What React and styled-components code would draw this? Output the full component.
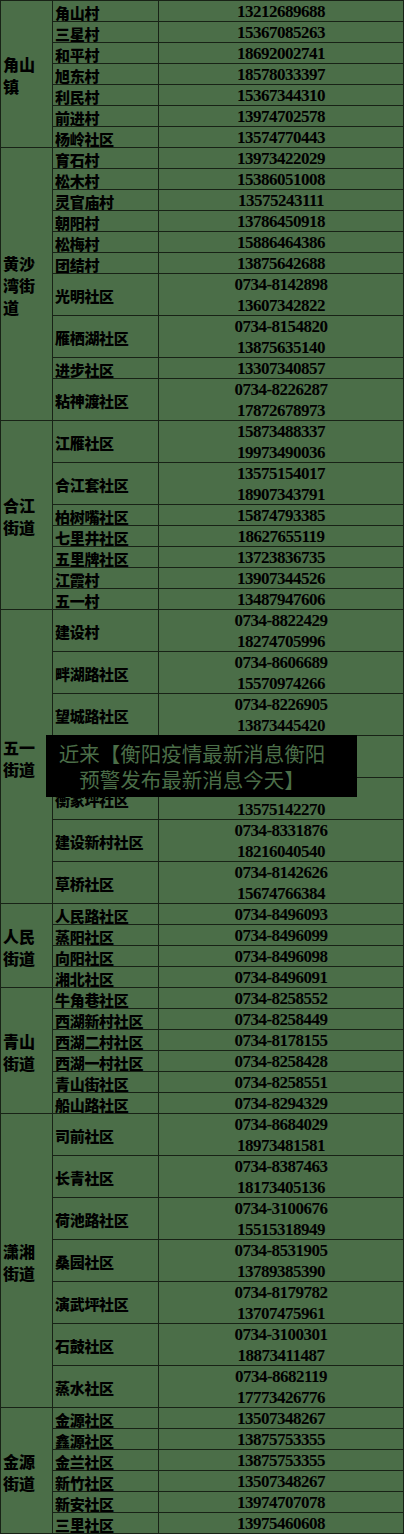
import React from 'react';
import styled, {createGlobalStyle} from 'styled-components';

const groups = [
    {name: '角山镇', rows: [
        ['角山村', ['13212689688']],
        ['三星村', ['15367085263']],
        ['和平村', ['18692002741']],
        ['旭东村', ['18578033397']],
        ['利民村', ['15367344310']],
        ['前进村', ['13974702578']],
        ['杨岭社区', ['13574770443']],
    ]},
    {name: '黄沙湾街道', rows: [
        ['育石村', ['13973422029']],
        ['松木村', ['15386051008']],
        ['灵官庙村', ['13575243111']],
        ['朝阳村', ['13786450918']],
        ['松梅村', ['15886464386']],
        ['团结村', ['13875642688']],
        ['光明社区', ['0734-8142898', '13607342822']],
        ['雁栖湖社区', ['0734-8154820', '13875635140']],
        ['进步社区', ['13307340857']],
        ['粘神渡社区', ['0734-8226287', '17872678973']],
    ]},
    {name: '合江街道', rows: [
        ['江雁社区', ['15873488337', '19973490036']],
        ['合江套社区', ['13575154017', '18907343791']],
        ['柏树嘴社区', ['15874793385']],
        ['七里井社区', ['18627655119']],
        ['五里牌社区', ['13723836735']],
        ['江霞村', ['13907344526']],
        ['五一村', ['13487947606']],
    ]},
    {name: '五一街道', rows: [
        ['建设村', ['0734-8822429', '18274705996']],
        ['畔湖路社区', ['0734-8606689', '15570974266']],
        ['望城路社区', ['0734-8226905', '13873445420']],
        ['解放路社区', ['0734-8221930', '13975401128']],
        ['衡家坪社区', ['0734-8142270', '13575142270']],
        ['建设新村社区', ['0734-8331876', '18216040540']],
        ['草桥社区', ['0734-8142626', '15674766384']],
    ]},
    {name: '人民街道', rows: [
        ['人民路社区', ['0734-8496093']],
        ['蒸阳社区', ['0734-8496099']],
        ['向阳社区', ['0734-8496098']],
        ['湘北社区', ['0734-8496091']],
    ]},
    {name: '青山街道', rows: [
        ['牛角巷社区', ['0734-8258552']],
        ['西湖新村社区', ['0734-8258449']],
        ['西湖二村社区', ['0734-8178155']],
        ['西湖一村社区', ['0734-8258428']],
        ['青山街社区', ['0734-8258551']],
        ['船山路社区', ['0734-8294329']],
    ]},
    {name: '潇湘街道', rows: [
        ['司前社区', ['0734-8684029', '18973481581']],
        ['长青社区', ['0734-8387463', '18173405136']],
        ['荷池路社区', ['0734-3100676', '15515318949']],
        ['桑园社区', ['0734-8531905', '13789385390']],
        ['演武坪社区', ['0734-8179782', '13707475961']],
        ['石鼓社区', ['0734-3100301', '18873411487']],
        ['蒸水社区', ['0734-8682119', '17773426776']],
    ]},
    {name: '金源街道', rows: [
        ['金源社区', ['13507348267']],
        ['鑫源社区', ['13875753355']],
        ['金兰社区', ['13875753355']],
        ['新竹社区', ['13507348267']],
        ['新安社区', ['13974707078']],
        ['三里社区', ['13975460608']],
    ]},
];

const GREEN = '#4b6e48';
const LINE = '#182216';

const GlobalStyle = createGlobalStyle`
    html, body {
        margin: 0;
        padding: 0;
        background: ${GREEN};
    }
    body {
        font-family: "Noto Sans CJK SC", "Noto Sans", sans-serif;
    }
`;

export default function App() {
    return (
        <>
            <GlobalStyle/>
            <Page>
                <Table>
                    {groups.map((g) => {
                        const units = g.rows.reduce((n, r) => n + r[1].length, 0);
                        return (
                            <React.Fragment key={g.name}>
                                <GroupCell $span={units}><GroupName>{g.name}</GroupName></GroupCell>
                                {g.rows.map(([name, phones]) => (
                                    <React.Fragment key={name}>
                                        <NameCell $span={phones.length}>{name}</NameCell>
                                        <PhoneCell $span={phones.length}>
                                            {phones.map((p) => <Phone key={p}>{p}</Phone>)}
                                        </PhoneCell>
                                    </React.Fragment>
                                ))}
                            </React.Fragment>
                        );
                    })}
                </Table>
                <Banner>近来【衡阳疫情最新消息衡阳预警发布最新消息今天】</Banner>
            </Page>
        </>
    );
}

const Page = styled.div`
    position: relative;
    width: 404px;
    height: 1534px;
    overflow: hidden;
`;

const Table = styled.div`
    display: grid;
    grid-template-columns: 51px 105px 244px;
    grid-auto-rows: 20px;
    gap: 1px;
    padding: 1px;
    background: ${LINE};
`;

const Cell = styled.div`
    background: ${GREEN};
    color: #000;
    grid-row: span ${(p) => p.$span};
    display: flex;
    align-items: center;
`;

const GroupCell = styled(Cell)`
    grid-column: 1;
    padding: 2px 3px 0 2px;
`;

const GroupName = styled.div`
    font-size: 16px;
    font-weight: 900;
    line-height: 22px;
    width: 34px;
`;

const NameCell = styled(Cell)`
    grid-column: 2;
    padding: 2px 0 0 2px;
    font-size: 15px;
    font-weight: 900;
    letter-spacing: -0.3px;
    white-space: nowrap;
`;

const PhoneCell = styled(Cell)`
    grid-column: 3;
    flex-direction: column;
    justify-content: center;
    padding-top: 2px;
`;

const Phone = styled.div`
    font-family: "Liberation Serif", "Times New Roman", serif;
    font-weight: 700;
    font-size: 17px;
    letter-spacing: -0.5px;
    line-height: 20.5px;
    text-align: center;
`;

const Banner = styled.div`
    position: absolute;
    left: 46px;
    top: 735px;
    width: 311px;
    height: 62px;
    box-sizing: border-box;
    padding: 5px 30px 0 11px;
    background: #000;
    color: ${GREEN};
    font-family: "Noto Sans CJK SC", sans-serif;
    font-size: 20.5px;
    line-height: 26px;
    text-align: center;
`;
